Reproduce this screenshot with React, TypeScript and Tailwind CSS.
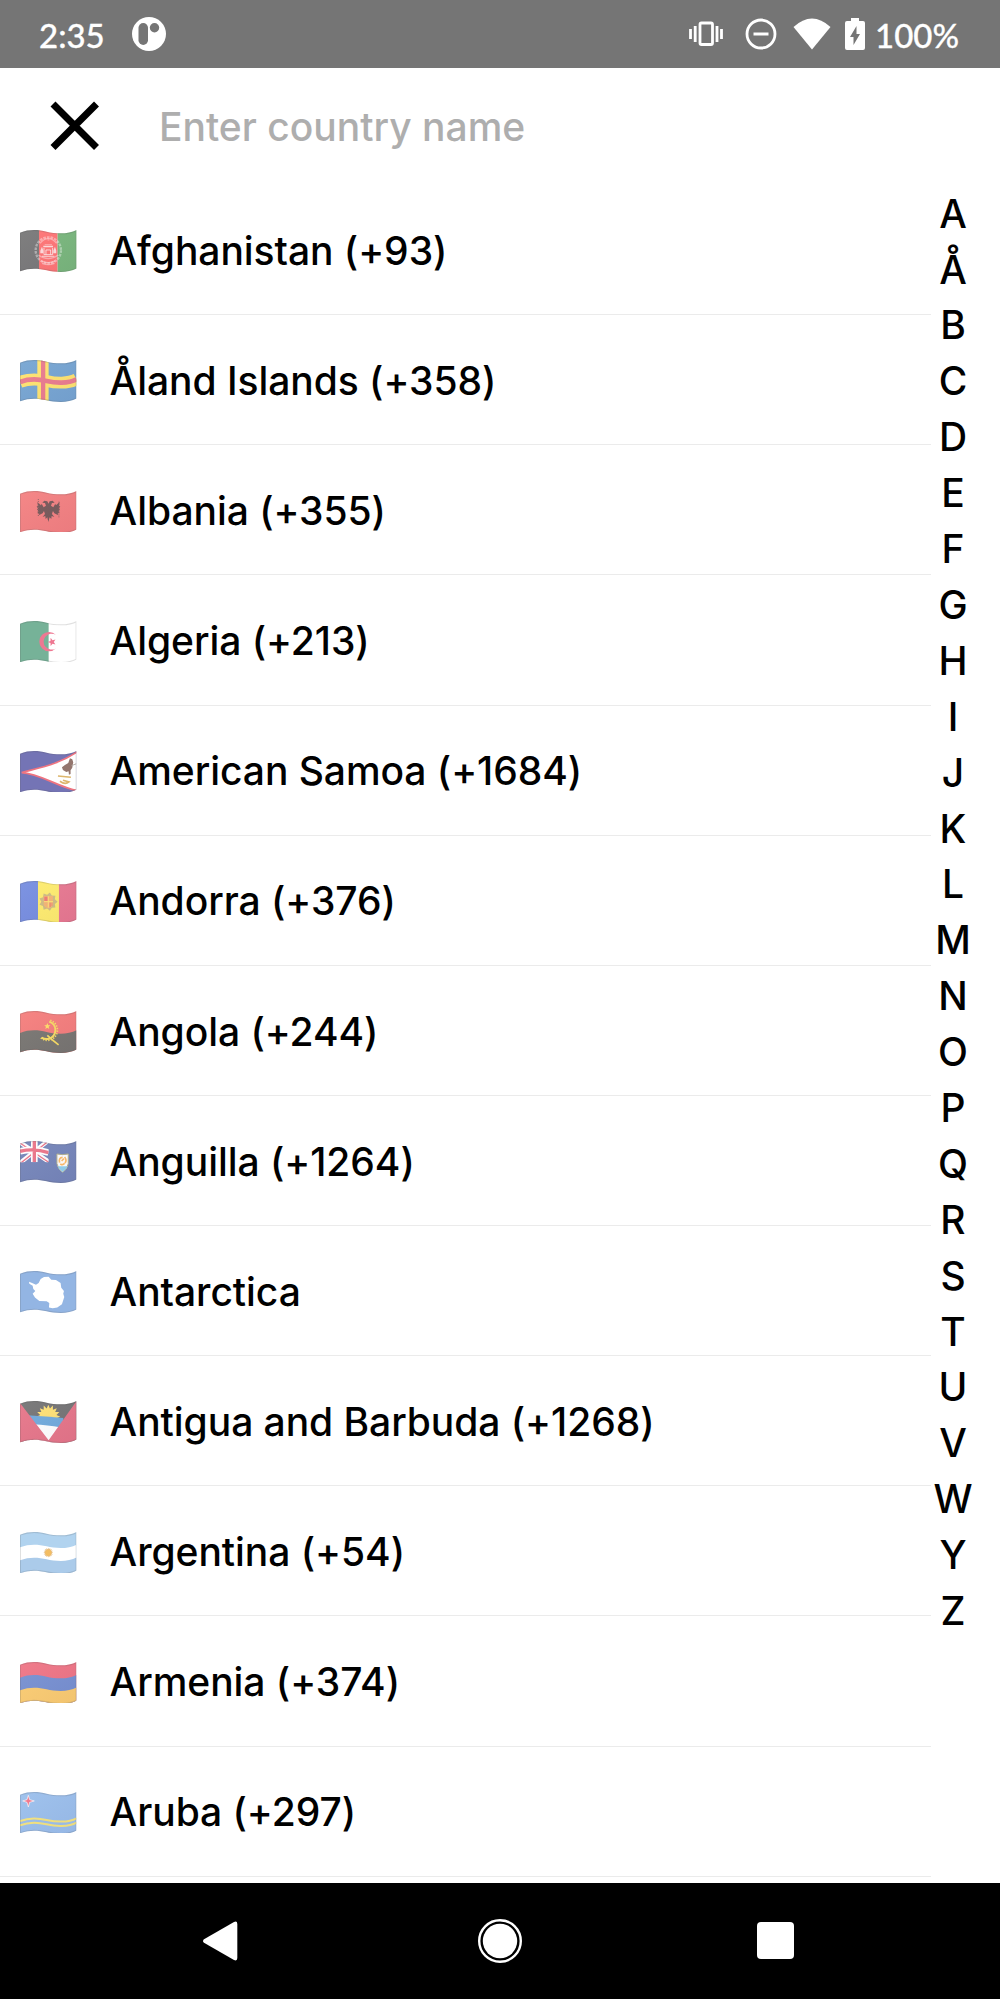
import React from "react";

const LETTERS = "AÅBCDEFGHIJKLMNOPQRSTUVWYZ".split("");

// Upper edge of the waving cloth, shifted down by y.
const edge = (y: number) =>
  `M0 ${y + 8} C28 ${y - 3} 55 ${y - 1} 80 ${y + 5} S145 ${y + 14} 170 ${y}`;

function Band({ y, fill }: { y: number; fill: string }) {
  return <path d={`${edge(y)} V140 H0Z`} fill={fill} />;
}

function Line({ y, stroke, width }: { y: number; stroke: string; width: number }) {
  return <path d={edge(y)} fill="none" stroke={stroke} strokeWidth={width} />;
}

function Flag({ id, children }: { id: string; children: React.ReactNode }) {
  const outline = `${edge(0)} V116 C145 130 105 127 80 121 S28 113 0 124Z`;
  return (
    <svg viewBox="0 0 170 125" className="h-[41.6px] w-[56.6px] shrink-0">
      <defs>
        <clipPath id={`cloth-${id}`}>
          <path d={outline} />
        </clipPath>
        <linearGradient id={`shade-${id}`} x1="0" y1="0" x2="1" y2="1">
          <stop offset="0" stopColor="#fff" stopOpacity="0.06" />
          <stop offset="1" stopColor="#402060" stopOpacity="0.05" />
        </linearGradient>
      </defs>
      <g clipPath={`url(#cloth-${id})`}>
        {children}
        {!["dz", "aq", "as", "ar"].includes(id) && <path d={outline} fill={`url(#shade-${id})`} />}
        <path d={outline} fill="none" stroke="#555" strokeOpacity="0.18" strokeWidth="6" />
      </g>
    </svg>
  );
}

const star = (cx: number, cy: number, r: number) =>
  Array.from({ length: 10 }, (_, i) => {
    const a = (Math.PI * i) / 5 - Math.PI / 2;
    const q = i % 2 ? r * 0.42 : r;
    return `${(cx + q * Math.cos(a)).toFixed(1)},${(cy + q * Math.sin(a)).toFixed(1)}`;
  }).join(" ");

const rays = (cx: number, cy: number, inner: number, outer: number, n: number) =>
  Array.from({ length: n * 2 }, (_, i) => {
    const a = (Math.PI * i) / n;
    const q = i % 2 ? inner : outer;
    return `${(cx + q * Math.cos(a)).toFixed(1)},${(cy + q * Math.sin(a)).toFixed(1)}`;
  }).join(" ");

const COUNTRIES: { id: string; name: string; art: React.ReactNode }[] = [
  {
    id: "af",
    name: "Afghanistan (+93)",
    art: (
      <>
        <path fill="#777" d="M0 0h58v130H0z" />
        <path fill="#ff7474" d="M57 0h56v130H57z" />
        <path fill="#78b77b" d="M113 0h60v130h-60z" />
        <g fill="none" stroke="#fff" strokeOpacity="0.4">
          <ellipse cx="85" cy="61" rx="38" ry="39" strokeWidth="7" strokeDasharray="8 3" />
          <path d="M60 40Q85 12 110 40M55 75Q85 97 115 75M64 93q21 10 42 0M66 100q19 8 38 0" strokeWidth="4" />
          <path d="M83 30h5M74 44h22" strokeWidth="3" />
        </g>
        <path fill="#fff" fillOpacity="0.75" d="M61 62l5-12 4 12v8h-9zM100 62l5-12 4 12v8h-9zM70 47h29v5H70z" />
        <path fill="none" stroke="#fff" strokeOpacity="0.7" strokeWidth="3" d="M72 54v20h26V54M78 74V60h14v14M66 79h37" />
      </>
    ),
  },
  {
    id: "ax",
    name: "Åland Islands (+358)",
    art: (
      <>
        <path fill="#75a5d2" d="M0 0h170v130H0z" />
        <Line y={58} stroke="#ffe46e" width={36} />
        <path fill="#ffe46e" d="M52 0h34v130H52z" />
        <Line y={58} stroke="#ea7b8d" width={14} />
        <path fill="#ea7b8d" d="M63 0h13v130H63z" />
      </>
    ),
  },
  {
    id: "al",
    name: "Albania (+355)",
    art: (
      <>
        <path fill="#f48080" d="M0 0h170v130H0z" />
        <path
          fill="#765858"
          d="M86 38l-4-7-9-2-6 6 8 1 3 8-7 5-6-11-2 5-11-10 2 13-4-1 4 8-3 1 4 7-3 3 6 4-2 5 12-6 4-7 3 9-7 9 8-3 1 9 5-5 3 14 4-14 5 5 1-9 8 3-7-9 3-9 4 7 12 6-2-5 6-4-3-3 4-7-3-1 4-8-4 1 2-13-11 10-2-5-6 11-7-5 3-8 8-1-6-6-9 2z"
        />
        <path stroke="#8f6060" strokeWidth="3" strokeDasharray="3 3" d="M55 24v54M117 32v49" />
      </>
    ),
  },
  {
    id: "dz",
    name: "Algeria (+213)",
    art: (
      <>
        <path fill="#fff" d="M0 0h170v130H0z" />
        <path fill="#76b298" d="M0 0h86v130H0z" />
        <path fill="#ee7892" d="M107.6 41.6A29 29 0 1 0 107.6 82.4A24 24 0 1 1 107.6 41.6Z" />
        <polygon fill="#ee7892" points={star(96, 63, 13)} transform="rotate(-18 96 63)" />
      </>
    ),
  },
  {
    id: "as",
    name: "American Samoa (+1684)",
    art: (
      <>
        <path fill="#7474b5" d="M0 0h170v130H0z" />
        <path fill="#fff" stroke="#ef7480" strokeWidth="5" d="M5 65C60 50 125 38 180 -3V121C120 112 60 67 5 65Z" />
        <path fill="#94766e" d="M150 22l7 3 3 9-3 16-5 8 0 11-5 2-1-10-7 2-10-6-3-8 9-7 10-6z" />
        <path stroke="#b9b1ad" strokeWidth="3" fill="none" d="M155 44l15-6" />
        <path stroke="#ddb66c" strokeWidth="5" fill="none" d="M114 75l39 4M120 91q16 11 27 2l-18-5" />
      </>
    ),
  },
  {
    id: "ad",
    name: "Andorra (+376)",
    art: (
      <>
        <path fill="#758de0" d="M0 0h55v130H0z" />
        <path fill="#ffed6d" d="M54 0h64v130H54z" />
        <path fill="#e87890" d="M117 0h54v130h-54z" />
        <polygon fill="#cfbd82" points={rays(85, 62, 21, 28, 9)} />
        <path fill="#f5b574" d="M71 45h28v27q-3 8-14 11-11-3-14-11z" />
        <path fill="#ef7b73" d="M73 47h10v13H73zM89 65h3v13h-3zM95 65h2v10h-2z" />
        <path stroke="#ffe174" strokeWidth="3" d="M85 46v34M72 62h27" />
      </>
    ),
  },
  {
    id: "ao",
    name: "Angola (+244)",
    art: (
      <>
        <path fill="#f57d7b" d="M0 0h170v130H0z" />
        <Band y={58} fill="#777570" />
        <polygon fill="#ffe065" points={star(82, 46, 10)} />
        <path fill="none" stroke="#f8dc61" strokeWidth="6" d="M88 32A27 27 0 0 1 85 84q-10 2-20-4" />
        <path fill="none" stroke="#f8dc61" strokeWidth="5" strokeDasharray="4 4" d="M91 28A31 31 0 0 1 87 88q-15 2-26-9" />
        <path fill="none" stroke="#f8dc61" strokeWidth="5" d="M82 73q15 14 34 29" />
      </>
    ),
  },
  {
    id: "ai",
    name: "Anguilla (+1264)",
    art: (
      <>
        <path fill="#7485b9" d="M0 0h170v130H0z" />
        <svg x="0" y="0" width="86" height="64" viewBox="0 0 86 64">
          <path stroke="#fff" strokeWidth="13" d="M0 4L86 62M86 -2L0 66" />
          <path stroke="#ec7488" strokeWidth="4" d="M0 6L86 64M86 0L0 68" />
          <path stroke="#fff" strokeWidth="20" d="M43 0v64M0 31q43-10 86 4" fill="none" />
          <path stroke="#ec7488" strokeWidth="10" d="M43 0v64M0 31q43-10 86 4" fill="none" />
        </svg>
        <path fill="#fff" stroke="#b4b28c" strokeWidth="3" d="M111 39q17 4 34 0v29q-3 17-17 26-14-10-17-26z" />
        <path fill="#91d0ee" d="M113 76h30q-4 10-15 17-11-7-15-17z" />
        <path fill="none" stroke="#ffbd68" strokeWidth="5" d="M119 65q-4-15 9-16M134 48q8 10 1 18M121 69q8 5 13-2M125 60l7-7" />
      </>
    ),
  },
  {
    id: "aq",
    name: "Antarctica",
    art: (
      <>
        <path fill="#93b5e3" d="M0 0h170v130H0z" />
        <path
          fill="#fff"
          d="M27 32L38 37 48 41 56 36 62 24 72 18 86 17 94 26 108 27 122 36 124 50 132 60 130 68 133 78 126 100 112 110 98 112 87 110 88 96 80 91 58 90 45 80 38 68 46 60 40 54 38 44 28 38Z"
        />
      </>
    ),
  },
  {
    id: "ag",
    name: "Antigua and Barbuda (+1268)",
    art: (
      <>
        <path fill="#747474" d="M0 0h170v130H0z" />
        <polygon fill="#ffe174" points={rays(85, 47, 25, 36, 16)} />
        <path fill="#70aadc" d="M20 43q60 4 110 8v30H20z" />
        <path fill="#fff" d="M40 70q45 3 80 9v50H40z" />
        <path fill="#e67588" d="M0 6L86 118V130H0zM170 0L86 118V130h84z" />
      </>
    ),
  },
  {
    id: "ar",
    name: "Argentina (+54)",
    art: (
      <>
        <path fill="#b1d3ef" d="M0 0h170v130H0z" />
        <Band y={38} fill="#fff" />
        <Band y={77} fill="#abcbea" />
        <polygon fill="#e6bd82" points={rays(85, 62, 10, 15, 16)} />
        <circle cx="85" cy="62" r="9" fill="#f3bd62" />
      </>
    ),
  },
  {
    id: "am",
    name: "Armenia (+374)",
    art: (
      <>
        <path fill="#ef7484" d="M0 0h170v130H0z" />
        <Band y={39} fill="#7690d1" />
        <Band y={77} fill="#fbcc70" />
      </>
    ),
  },
  {
    id: "aw",
    name: "Aruba (+297)",
    art: (
      <>
        <path fill="#9abfec" d="M0 0h170v130H0z" />
        <Line y={79} stroke="#f5e47c" width={6} />
        <Line y={92} stroke="#f5e47c" width={6} />
        <path fill="#f47388" stroke="#fff" strokeWidth="2" d="M25 10l4 13 14 4-14 4-4 14-4-14-13-4 13-4z" />
      </>
    ),
  },
];

function StatusBar() {
  return (
    <div className="flex h-[68px] shrink-0 items-center bg-[#757575] px-[39px] font-['Lato',sans-serif] text-[33px] font-medium text-white">
      <span className="w-[66px] pt-[3px] whitespace-nowrap [-webkit-text-stroke:0.3px_white]">2:35</span>
      <svg viewBox="0 0 34 34" className="ml-[27px] h-[34px] w-[34px]">
        <circle cx="17" cy="17" r="17" fill="#fff" />
        <rect x="6.5" y="6" width="9.5" height="22" rx="4.75" fill="#757575" />
        <circle cx="22.5" cy="10.8" r="4.7" fill="#757575" />
      </svg>
      <svg viewBox="0 0 34 26" className="ml-auto h-[26px] w-[34px]" fill="none" stroke="#fff" strokeWidth="2.8">
        <rect x="11" y="2" width="12.5" height="21.5" rx="1.5" />
        <path d="M1.5 8v10M6.2 5v16M28 5v16M32.5 8v10" />
      </svg>
      <svg viewBox="0 0 32 32" className="ml-[22px] h-8 w-8" fill="none" stroke="#fff" strokeWidth="2.8">
        <circle cx="16" cy="16" r="14" />
        <path d="M8.5 16h15" strokeWidth="3" />
      </svg>
      <svg viewBox="0 0 38 32" className="ml-[16px] h-8 w-[38px]" fill="#fff">
        <path d="M0.5 9Q19-8 37.5 9L19 31.5Z" />
      </svg>
      <svg viewBox="0 0 20 32" className="ml-[14px] h-8 w-5">
        <path d="M6 0h8v3h4q2 0 2 2v25q0 2-2 2H2q-2 0-2-2V5q0-2 2-2h4z" fill="#fff" />
        <path d="M11.5 8v8H15L8.5 27v-8H5z" fill="#757575" />
      </svg>
      <span className="ml-[10px] w-[86px] pt-[3px] whitespace-nowrap [-webkit-text-stroke:0.3px_white]">100%</span>
    </div>
  );
}

export default function App() {
  return (
    <div className="flex h-[1999px] w-[1000px] flex-col overflow-hidden bg-white font-['Inter',sans-serif] text-[39px] text-black">
      <StatusBar />
      <header className="flex h-[116px] shrink-0 items-center pl-[50px]">
        <button aria-label="Close" className="h-[50px] w-[50px]">
          <svg viewBox="0 0 50 50" className="h-full w-full" stroke="#000" strokeWidth="7">
            <path d="M3 3l43.5 43.5M46.5 3L3 46.5" />
          </svg>
        </button>
        <input
          aria-label="Country"
          placeholder="Enter country name"
          className="ml-[59px] w-[600px] bg-transparent pt-[2px] font-medium outline-none placeholder:text-[#aeaeae] placeholder:opacity-100"
        />
      </header>
      <main className="flex min-h-0 flex-1 overflow-hidden">
        <ul className="w-[931px] shrink-0 pt-px">
          {COUNTRIES.map((c) => (
            <li key={c.id} className="flex h-[130.13px] items-center border-b border-[#ebebeb] pt-[3px] pl-5 font-medium">
              <Flag id={c.id}>{c.art}</Flag>
              <span className="ml-[33px] tracking-[-0.05px] whitespace-nowrap">{c.name}</span>
            </li>
          ))}
        </ul>
        <nav className="flex w-[44px] flex-col items-center pt-[2px] font-medium">
          {LETTERS.map((l) => (
            <span key={l} className="flex h-[55.9px] shrink-0 items-center">
              {l}
            </span>
          ))}
        </nav>
      </main>
      <footer className="flex h-[116.5px] shrink-0 items-center bg-black pl-[203px]">
        <svg viewBox="0 0 35 40" className="h-10 w-[35px]" fill="#fff">
          <path d="M1 18.2L31 1q3.3-1.5 3.3 2v34q0 3.5-3.3 2L1 21.8Q-1 20 1 18.2Z" />
        </svg>
        <svg viewBox="0 0 44 44" className="ml-[239.5px] h-11 w-11">
          <circle cx="22" cy="22" r="20.8" fill="none" stroke="#fff" strokeWidth="2.4" />
          <circle cx="22" cy="22" r="17.2" fill="#fff" />
        </svg>
        <div className="ml-[235px] h-[37px] w-[37px] rounded-[4px] bg-white" />
      </footer>
    </div>
  );
}
